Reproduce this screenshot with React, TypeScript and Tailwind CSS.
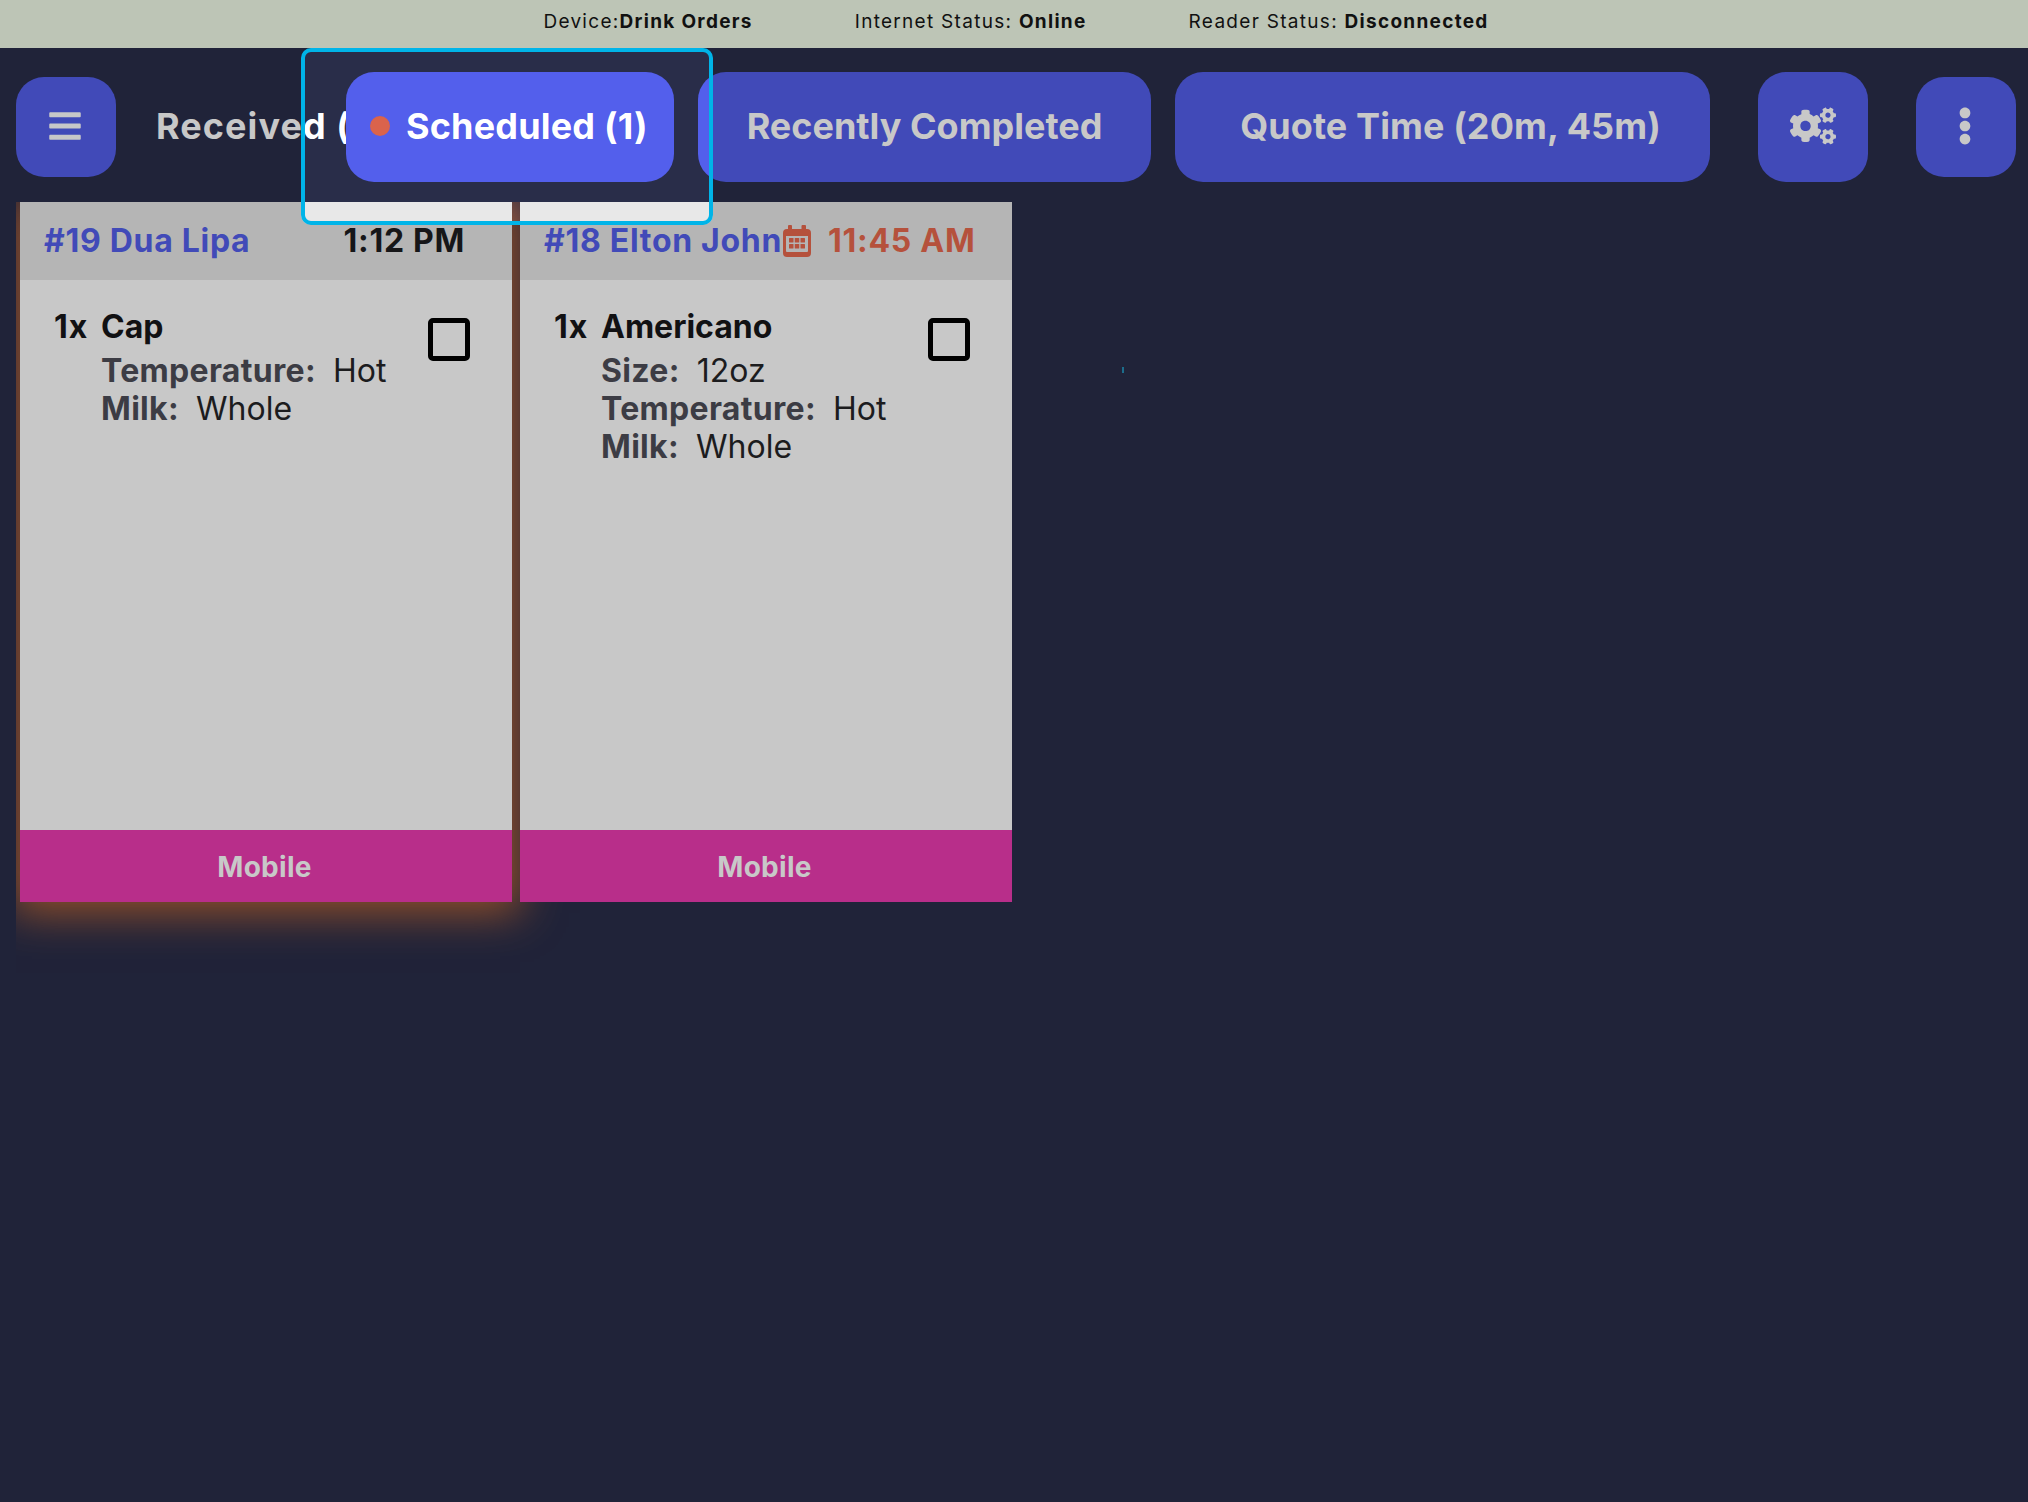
import { FaBars, FaCogs, FaEllipsisV } from 'react-icons/fa'

function CalendarIcon() {
  return (
    <svg className="ml-[1px] mr-[17px] shrink-0" width="28" height="32" viewBox="0 0 28 32" fill="currentColor">
      <rect x="5" y="0" width="4" height="7" rx="1" />
      <rect x="18.5" y="0" width="4.5" height="7" rx="1" />
      <path
        fillRule="evenodd"
        d="M4 4h20a4 4 0 0 1 4 4v20a4 4 0 0 1-4 4H4a4 4 0 0 1-4-4V8a4 4 0 0 1 4-4zM3 11v15a1 1 0 0 0 1 1h20a1 1 0 0 0 1-1V11z"
      />
      <rect x="6" y="13" width="4.5" height="4.5" rx="0.5" />
      <rect x="11.75" y="13" width="4.5" height="4.5" rx="0.5" />
      <rect x="17.5" y="13" width="4.5" height="4.5" rx="0.5" />
      <rect x="6" y="19" width="4.5" height="4.5" rx="0.5" />
      <rect x="11.75" y="19" width="4.5" height="4.5" rx="0.5" />
      <rect x="17.5" y="19" width="4.5" height="4.5" rx="0.5" />
    </svg>
  )
}

function StatusItem({ label, value }: { label: string; value: string }) {
  return (
    <span className="whitespace-pre">
      {label}
      <span className="font-bold">{value}</span>
    </span>
  )
}

function OrderCard({
  title,
  time,
  scheduled,
  name,
  options,
  glow,
}: {
  title: string
  time: string
  scheduled?: boolean
  name: string
  options: [string, string][]
  glow?: boolean
}) {
  return (
    <div
      className={
        glow
          ? 'relative flex h-[700px] w-[492px] shrink-0 flex-col shadow-[0_3px_40px_8px_#94502a]'
          : 'relative flex h-[700px] w-[492px] shrink-0 flex-col'
      }
    >
      <div className="flex h-[78px] shrink-0 items-center justify-between whitespace-nowrap bg-[#b5b5b5] pl-6 pr-[47px] text-[32px] font-bold tracking-[0.022em]">
        <span className="shrink-0 text-[#414ab8]">{title}</span>
        {scheduled ? (
          <span className="flex shrink-0 items-center text-[#b5513c]">
            <CalendarIcon />
            {time}
          </span>
        ) : (
          <span className="shrink-0 text-[#161618]">{time}</span>
        )}
      </div>
      <div className="flex min-h-0 flex-1 justify-between bg-[#c8c8c8] pl-[34px] pr-[42px] pt-[28px]">
        <div className="flex text-[32px] leading-[38px]">
          <span className="w-[47px] font-bold tracking-[0.03em] text-[#111113]">1x</span>
          <div>
            <div className="mb-[6px] font-bold text-[#111113]">{name}</div>
            {options.map(([k, v]) => (
              <div key={k} className="h-[38px] whitespace-nowrap text-[#1c1c1e]">
                <span className="mr-[17px] font-bold tracking-[0.01em] text-[#3c3c44]">{k}:</span>
                {v}
              </div>
            ))}
          </div>
        </div>
        <div className="mt-[10px] h-[43px] w-[42px] shrink-0 rounded-[5px] border-[5px] border-black" />
      </div>
      <div className="flex h-[72px] shrink-0 items-center justify-center bg-[#b82e8a] pr-[3px] pt-[1px] text-[28px] font-bold tracking-[0.01em] text-[#c8c8c8]">
        Mobile
      </div>
    </div>
  )
}

export default function App() {
  return (
    <div className="relative min-h-[1502px] bg-[#202339] font-['Inter',sans-serif]">
      <div className="flex h-12 items-center justify-center gap-[102px] bg-[#bdc5b6] pb-1 pl-1 text-[19px] tracking-[0.068em] text-[#111]">
        <StatusItem label="Device:" value="Drink Orders" />
        <StatusItem label="Internet Status: " value="Online" />
        <StatusItem label="Reader Status: " value="Disconnected" />
      </div>

      <div className="flex h-[154px] items-center pl-4 pr-3 pt-1 text-[36px] font-bold text-[#c8c8c8]">
        <button className="flex h-[100px] w-[100px] shrink-0 items-center justify-center rounded-[28px] bg-[#414ab8] pb-[2px] pr-[2px]">
          <FaBars size={36} />
        </button>
        <div className="w-[230px] shrink-0 whitespace-nowrap pb-[2px] pl-[40px] tracking-[0.03em]">Received (2)</div>
        <button className="relative flex h-[110px] w-[328px] shrink-0 items-center rounded-[28px] bg-[#414ab8] pb-[2px] pl-6 tracking-[0.005em]">
          <span className="mr-[16px] h-[20px] w-[20px] rounded-full bg-[#aa4d3b]" />
          Scheduled (1)
        </button>
        <button className="ml-6 flex h-[110px] w-[453px] shrink-0 items-center justify-center rounded-[28px] bg-[#414ab8] pb-[2px]">
          Recently Completed
        </button>
        <button className="ml-6 flex h-[110px] w-[535px] shrink-0 items-center justify-center rounded-[28px] bg-[#414ab8] pb-[2px] pl-4 tracking-[0.003em]">
          Quote Time (20m, 45m)
        </button>
        <button className="ml-12 flex h-[110px] w-[110px] shrink-0 items-center justify-center rounded-[28px] bg-[#414ab8] pb-[2px]">
          <FaCogs size={46} />
        </button>
        <button className="ml-12 flex h-[100px] w-[100px] shrink-0 items-center justify-center rounded-[28px] bg-[#414ab8] pb-[2px] pr-[2px]">
          <FaEllipsisV size={38} />
        </button>
      </div>

      <div className="ml-4 flex h-[800px] items-start overflow-hidden pl-1">
        <OrderCard
          title="#19 Dua Lipa"
          time="1:12 PM"
          name="Cap"
          options={[
            ['Temperature', 'Hot'],
            ['Milk', 'Whole'],
          ]}
          glow
        />
        <div className="ml-2 shrink-0">
          <OrderCard
            title="#18 Elton John"
            time="11:45 AM"
            scheduled
            name="Americano"
            options={[
              ['Size', '12oz'],
              ['Temperature', 'Hot'],
              ['Milk', 'Whole'],
            ]}
          />
        </div>
      </div>

      {/* focus highlight over the tabs */}
      <div className="absolute left-[301px] top-[48px] h-[177px] w-[412px] rounded-[10px] border-4 border-[#00b4e8] backdrop-brightness-[1.28]" />
      <div className="absolute left-[1122px] top-[367px] h-[6px] w-[2px] bg-[#1c6d8c]" />
    </div>
  )
}
